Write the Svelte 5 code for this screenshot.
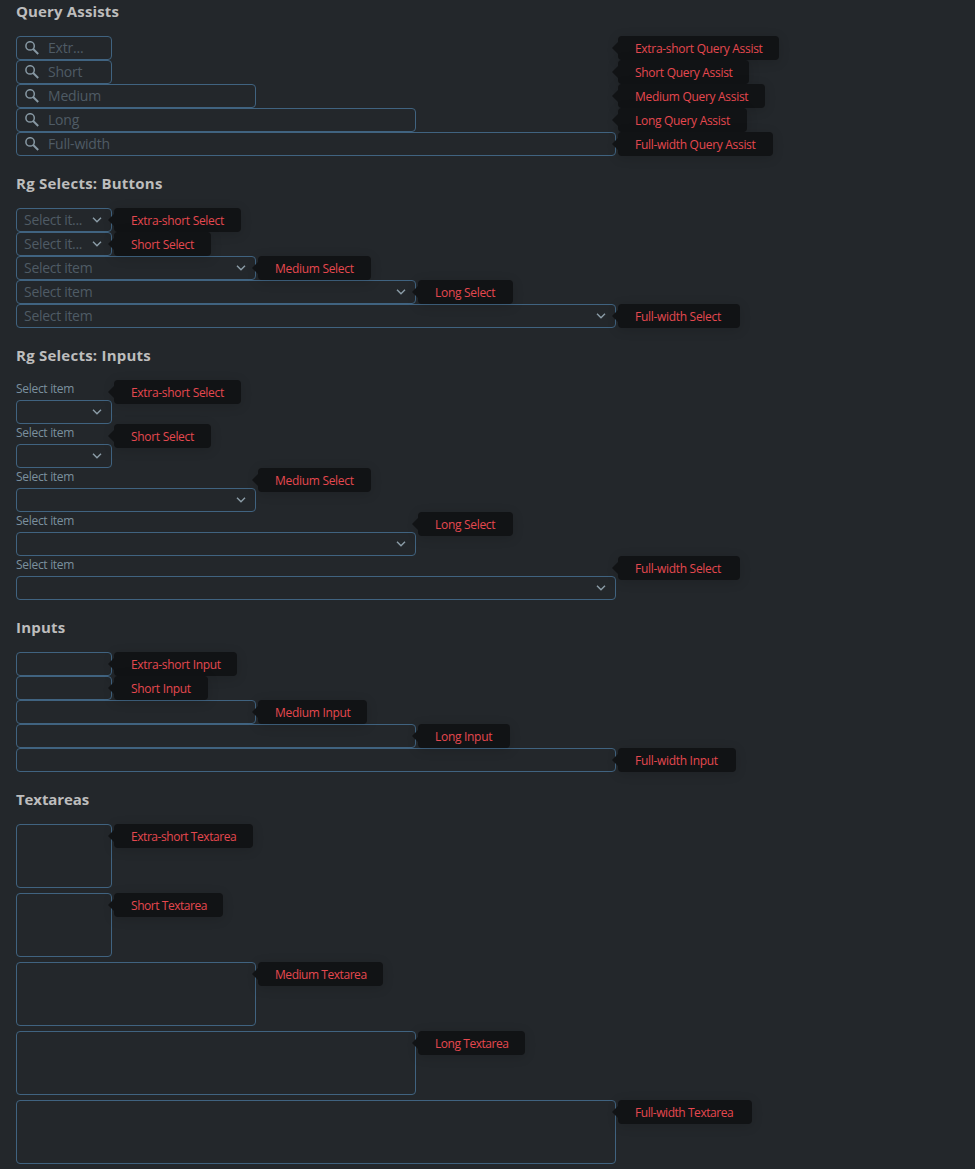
<script>
  const sizes = ['Extra-short', 'Short', 'Medium', 'Long', 'Full-width'];
  const fieldWidths = [96, 96, 240, 400, 600];
  const sections = [
    { title: 'Query Assists', kind: 'query', noun: 'Query Assist', tips: [161, 131, 147, 129, 155] },
    { title: 'Rg Selects: Buttons', kind: 'button', noun: 'Select', tips: [127, 97, 113, 95, 122] },
    { title: 'Rg Selects: Inputs', kind: 'select', noun: 'Select', tips: [127, 97, 113, 95, 122] },
    { title: 'Inputs', kind: 'input', noun: 'Input', tips: [123, 94, 109, 92, 118] },
    { title: 'Textareas', kind: 'area', noun: 'Textarea', tips: [139, 109, 125, 107, 134] }
  ];
</script>

{#snippet chevron()}
  <svg class="chevron" width="10" height="6" viewBox="0 0 10 6"><path d="M1 .8 5 4.8 9 .8" /></svg>
{/snippet}

<main>
  {#each sections as section}
    <section class={section.kind}>
      <h2>{section.title}</h2>
      {#each sizes as size, i}
        <div class="row">
          <div class="control" style:width="{section.kind === 'query' ? 600 : fieldWidths[i]}px">
            {#if section.kind === 'select'}<div class="label">Select item</div>{/if}
            <div class="field" style:width="{fieldWidths[i]}px">
              {#if section.kind === 'query'}
                <svg class="search" width="14" height="14" viewBox="0 0 14 14"><circle cx="5.1" cy="4.9" r="4.2" /><path d="M8.2 8 13.2 13" /></svg>
                <span class="placeholder">{i === 0 ? 'Extr...' : size}</span>
              {:else if section.kind === 'button'}
                <span class="placeholder">{i < 2 ? 'Select it...' : 'Select item'}</span>
                {@render chevron()}
              {:else if section.kind === 'select'}
                {@render chevron()}
              {/if}
            </div>
          </div>
          <div class="tip" style:width="{section.tips[i]}px">{size} {section.noun}</div>
        </div>
      {/each}
    </section>
  {/each}
</main>

<style>
  :global(body) {
    background: #23272b;
  }
  main {
    box-sizing: border-box;
    height: 1169px;
    overflow: hidden;
    padding: 0 16px;
    background: #23272b;
    font-family: 'Open Sans', 'Noto Sans', sans-serif;
  }
  h2 {
    margin: 0 0 14px;
    font-size: 15px;
    line-height: 22px;
    letter-spacing: 0.23px;
    font-weight: 700;
    color: #bdbdbd;
  }
  .query h2 {
    letter-spacing: 0.15px;
  }
  .area h2 {
    letter-spacing: -0.1px;
  }
  section + section {
    margin-top: 16px;
  }
  .row {
    display: flex;
    align-items: flex-start;
  }
  .area .row {
    margin-bottom: 5px;
  }
  .area .row:last-child {
    margin-bottom: 0;
  }
  .field {
    box-sizing: border-box;
    display: flex;
    align-items: center;
    height: 24px;
    border: 1px solid #406380;
    border-radius: 4px;
    padding: 0 9px 0 7px;
  }
  .area .field {
    height: 64px;
  }
  .label {
    height: 20px;
    font-size: 12px;
    line-height: 18px;
    letter-spacing: -0.3px;
    color: #7b909e;
  }
  .placeholder {
    font-size: 14px;
    line-height: 20px;
    letter-spacing: -0.3px;
    white-space: nowrap;
    color: #4f5b65;
  }
  .query .placeholder {
    letter-spacing: -0.2px;
  }
  .search {
    flex: none;
    margin: 0 9px 0 1px;
    fill: none;
    stroke: #8798a3;
    stroke-width: 1.5;
  }
  .search path {
    stroke-width: 1.9;
  }
  .chevron {
    flex: none;
    margin-left: auto;
    fill: none;
    stroke: #8c9da8;
    stroke-width: 1.4;
  }
  .tip {
    position: relative;
    box-sizing: border-box;
    flex: none;
    height: 24px;
    margin-left: 2px;
    padding: 1px 0 0 17px;
    border-radius: 4px;
    background: #111315;
    box-shadow: 0 2px 12px rgba(0, 0, 0, 0.14);
    font-size: 12px;
    line-height: 24px;
    letter-spacing: -0.3px;
    white-space: nowrap;
    color: #e5484f;
  }
  .area .tip {
    letter-spacing: -0.45px;
  }
  .tip::before {
    content: '';
    position: absolute;
    left: -6px;
    top: 6px;
    border: 6px solid transparent;
    border-left: 0;
    border-right-color: #111315;
  }
</style>
